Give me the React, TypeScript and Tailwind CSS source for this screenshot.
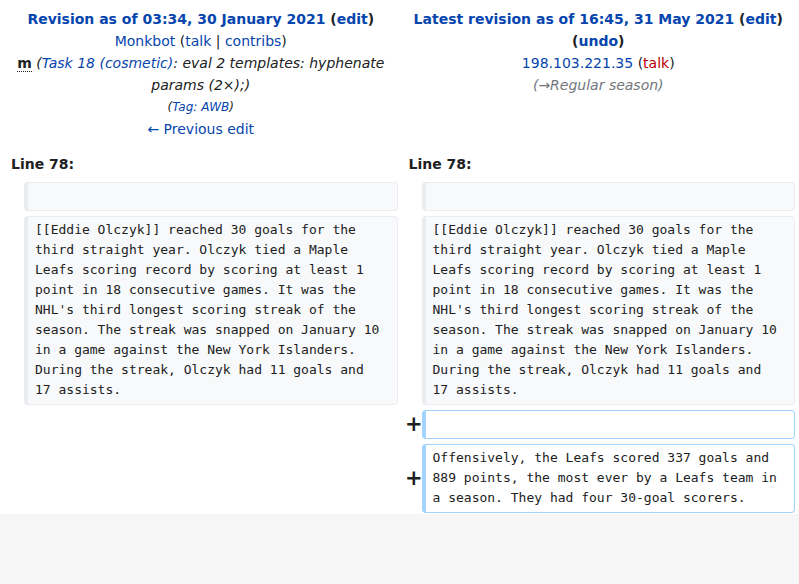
import React from 'react';

const link = 'text-[#0645ad]';

const Context: React.FC<{ children?: React.ReactNode }> = ({ children }) => (
  <div className="rounded-[4px] border border-l-4 border-[#eaecf0] bg-[#f8f9fa] pt-[3px] pb-[4px] pl-[7px] pr-[14px] font-['DejaVu_Sans_Mono',monospace] text-[13px] leading-[20px] text-[#202122] whitespace-pre-wrap break-words min-h-[29px]">
    {children}
  </div>
);

const Added: React.FC<{ children?: React.ReactNode }> = ({ children }) => (
  <div className="rounded-[4px] border border-l-4 border-[#a3d3ff] bg-white pt-[3px] pb-[4px] pl-[7px] pr-[14px] font-['DejaVu_Sans_Mono',monospace] text-[13px] leading-[20px] text-[#202122] whitespace-pre-wrap break-words min-h-[29px]">
    {children}
  </div>
);

const Marker: React.FC<{ sign?: string }> = ({ sign }) => (
  <div className="-mr-[5px] flex items-center justify-end text-[21px] font-bold leading-none text-[#202122]">
    {sign}
  </div>
);

const olczyk =
  "[[Eddie Olczyk]] reached 30 goals for the third straight year. Olczyk tied a Maple Leafs scoring record by scoring at least 1 point in 18 consecutive games. It was the NHL's third longest scoring streak of the season. The streak was snapped on January 10 in a game against the New York Islanders. During the streak, Olczyk had 11 goals and 17 assists.";

export default function App() {
  return (
    <div className="min-h-[584px] bg-[#f6f6f6] font-['DejaVu_Sans',sans-serif] text-[14px] text-[#202122]">
      <div className="bg-white px-[4px] pt-[8px] pb-[1px]">
        <div className="grid grid-cols-[16px_1fr_16px_1fr] gap-x-[4px] gap-y-[5px]">
          {/* headers */}
          <div className="col-span-2 text-center leading-[22px]">
            <div className="font-bold">
              <span className={link}>Revision as of 03:34, 30 January 2021</span> (<span className={link}>edit</span>)
            </div>
            <div>
              <span className={link}>Monkbot</span> (<span className={link}>talk</span> | <span className={link}>contribs</span>)
            </div>
            <div className="px-[10px]">
              <abbr className="font-bold no-underline border-b border-dotted border-[#202122]" title="This is a minor edit">m</abbr>{' '}
              <i>
                (<span className={link}>Task 18 (cosmetic)</span>: eval 2 templates: hyphenate params (2×);)
              </i>
            </div>
            <div className="text-[12px] italic leading-[22px]">
              (<span className={link}>Tag: AWB</span>)
            </div>
            <div>
              <span className={link}>← Previous edit</span>
            </div>
          </div>
          <div className="col-span-2 text-center leading-[22px]">
            <div className="font-bold">
              <span className={link}>Latest revision as of 16:45, 31 May 2021</span> (<span className={link}>edit</span>)
              <br />
              (<span className={link}>undo</span>)
            </div>
            <div>
              <span className={link}>198.103.221.35</span> (<span className="text-[#ba0000]">talk</span>)
            </div>
            <div className="italic text-[#72777d]">
              (<span>→Regular season</span>)
            </div>
          </div>

          {/* line numbers */}
          <div className="col-span-2 mt-[8px] mb-[2px] pl-[7px] font-bold leading-[22px]">Line 78:</div>
          <div className="col-span-2 mt-[8px] mb-[2px] pl-[7px] font-bold leading-[22px]">Line 78:</div>

          {/* rows */}
          <div />
          <Context>{'\u00a0'}</Context>
          <div />
          <Context>{'\u00a0'}</Context>

          <div />
          <Context>{olczyk}</Context>
          <div />
          <Context>{olczyk}</Context>

          <div />
          <div />
          <Marker sign="+" />
          <Added>{'\u00a0'}</Added>

          <div />
          <div />
          <Marker sign="+" />
          <Added>
            Offensively, the Leafs scored 337 goals and 889 points, the most ever by a Leafs team in a season. They had four 30-goal scorers.
          </Added>
        </div>
      </div>
    </div>
  );
}
